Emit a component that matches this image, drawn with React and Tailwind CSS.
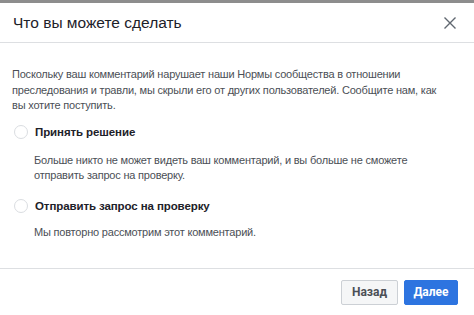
export default function App() {
  return (
    <div
      className="w-[474px] h-[315px] overflow-hidden bg-white flex flex-col"
      style={{ fontFamily: '"Liberation Sans", Arial, sans-serif' }}
    >
      <div className="h-[3px] bg-[#8d8d8d] shrink-0" />
      <div className="h-[40px] flex items-center justify-between pl-[13px] pr-[17px] border-b border-[#dddfe2] shrink-0">
        <span className="text-[15.5px] text-[#1d2129]">Что вы можете сделать</span>
        <svg width="14" height="14" viewBox="0 0 14 14" className="text-[#606770]">
          <path d="M1.5 1.5 L12.5 12.5 M12.5 1.5 L1.5 12.5" stroke="currentColor" strokeWidth="1.4" />
        </svg>
      </div>

      <div className="flex-1 pl-[12px] pr-[8px] pt-[24px] whitespace-nowrap">
        <p className="text-[11px] tracking-[-0.2px] leading-[15.5px] text-[#4b4f56]">
          Поскольку ваш комментарий нарушает наши Нормы сообщества в отношении
          <br />
          преследования и травли, мы скрыли его от других пользователей. Сообщите нам, как
          <br />
          вы хотите поступить.
        </p>

        <div className="mt-[10px] flex items-center gap-[7px]">
          <span className="w-[14px] h-[14px] rounded-full border border-[#dadde1] bg-white shrink-0 ml-[2px]" />
          <span className="text-[11.5px] tracking-[-0.1px] font-bold text-[#1d2129]">Принять решение</span>
        </div>
        <p className="mt-[12px] ml-[22px] text-[11px] tracking-[-0.2px] leading-[15.5px] text-[#4b4f56]">
          Больше никто не может видеть ваш комментарий, и вы больше не сможете
          <br />
          отправить запрос на проверку.
        </p>

        <div className="mt-[14px] flex items-center gap-[7px]">
          <span className="w-[14px] h-[14px] rounded-full border border-[#dadde1] bg-white shrink-0 ml-[2px]" />
          <span className="text-[11.5px] tracking-[-0.1px] font-bold text-[#1d2129]">Отправить запрос на проверку</span>
        </div>
        <p className="mt-[10px] ml-[22px] text-[11px] tracking-[-0.2px] leading-[15.5px] text-[#4b4f56]">
          Мы повторно рассмотрим этот комментарий.
        </p>
      </div>

      <div className="h-[47px] border-t border-[#dddfe2] flex items-center justify-end gap-[6px] pr-[16px] shrink-0">
        <button
          className="h-[25px] px-[10px] rounded-[2px] border border-[#ccd0d5] bg-[#f5f6f7] text-[12px] font-bold text-[#4b4f56]"
          style={{ fontFamily: 'Roboto, "Liberation Sans", sans-serif' }}
        >
          Назад
        </button>
        <button
          className="h-[25px] w-[54px] rounded-[2px] border border-[#2d74e0] bg-[#2d74e0] text-[12px] font-bold text-white"
          style={{ fontFamily: 'Roboto, "Liberation Sans", sans-serif' }}
        >
          Далее
        </button>
      </div>
    </div>
  );
}
